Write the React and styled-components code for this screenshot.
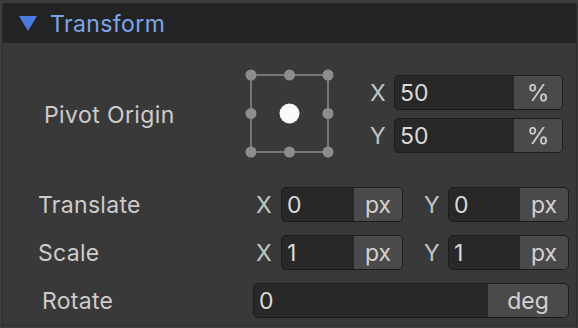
import React from 'react'
import styled, { createGlobalStyle } from "styled-components";

const GlobalStyle = createGlobalStyle`
  html, body {
    margin: 0;
    padding: 0;
    background: #3c3c3c;
  }
  #root {
    padding: 3px 1px 2px 2px;
  }
`;

const PivotDots = () => {
  const pts = [7, 45.5, 84];
  const dots = [];
  pts.forEach((y) =>
    pts.forEach((x) => {
      if (x === 45.5 && y === 45.5) return;
      dots.push(<circle key={`${x}-${y}`} cx={x} cy={y} r="5.5" fill="#8d8d8d" />);
    })
  );
  return (
    <svg width="92" height="92" viewBox="0 0 92 92">
      <rect x="7" y="7" width="77" height="77" fill="none" stroke="#777" strokeWidth="2" />
      {dots}
      <circle cx="45.5" cy="45.5" r="10" fill="#fafafa" />
    </svg>
  );
};

const Field = ({ value, unit, width, unitWidth = 48 }) => (
  <InputBox $width={width}>
    <Value>{value}</Value>
    <Unit $width={unitWidth}>{unit}</Unit>
  </InputBox>
);

const App = () => {
  return (
    <>
      <GlobalStyle />
      <Panel>
        <Header>
          <Caret />
          <Title>Transform</Title>
        </Header>
        <PivotRow>
          <PivotLabel>Pivot Origin</PivotLabel>
          <PivotDots />
          <PivotFields>
            <FieldLine>
              <Axis>X</Axis>
              <Field value="50" unit="%" width={169} />
            </FieldLine>
            <FieldLine>
              <Axis>Y</Axis>
              <Field value="50" unit="%" width={169} />
            </FieldLine>
          </PivotFields>
        </PivotRow>
        <Rows>
          <Row>
            <RowLabel $indent={35}>Translate</RowLabel>
            <Axis $pad={3} $width={28}>X</Axis>
            <Field value="0" unit="px" width={122} />
            <Axis $gap={21}>Y</Axis>
            <Field value="0" unit="px" width={121} />
          </Row>
          <Row>
            <RowLabel $indent={35}>Scale</RowLabel>
            <Axis $pad={3} $width={28}>X</Axis>
            <Field value="1" unit="px" width={122} />
            <Axis $gap={21}>Y</Axis>
            <Field value="1" unit="px" width={121} />
          </Row>
          <Row>
            <RowLabel $indent={39}>Rotate</RowLabel>
            <Field value="0" unit="deg" width={316} unitWidth={80} />
          </Row>
        </Rows>
      </Panel>
    </>
  )
}

export default App

const Panel = styled.div`
  height: 322px;
  background: #393939;
  border: 1px solid #2a2a2a;
  border-top: none;
  font-family: Inter, "Noto Sans", sans-serif;
  font-size: 23px;
  color: #cccccc;
  overflow: hidden;
`;

const Header = styled.div`
  height: 40px;
  background: #232323;
  display: flex;
  align-items: center;
  padding-left: 16px;
`;

const Caret = styled.span`
  width: 0;
  height: 0;
  border-left: 9px solid transparent;
  border-right: 9px solid transparent;
  border-top: 15px solid #4a7be0;
  margin-top: 1px;
`;

const Title = styled.span`
  margin-left: 13px;
  margin-top: 1px;
  color: #7ba6ec;
  letter-spacing: 0.4px;
`;

const PivotRow = styled.div`
  display: flex;
  align-items: center;
  margin-top: 25px;
  height: 92px;
`;

const PivotLabel = styled.div`
  width: 200px;
  padding-left: 41px;
  margin-top: 2px;
  letter-spacing: 0.4px;
`;

const PivotFields = styled.div`
  display: flex;
  flex-direction: column;
  gap: 8px;
  margin-left: 34px;
`;

const FieldLine = styled.div`
  display: flex;
  align-items: center;
`;

const Axis = styled.span`
  width: ${(p) => p.$width || 24}px;
  padding-left: ${(p) => p.$pad || 0}px;
  margin-left: ${(p) => p.$gap || 0}px;
  box-sizing: border-box;
  color: #c4c4c4;
`;

const InputBox = styled.div`
  width: ${(p) => p.$width}px;
  height: 35px;
  box-sizing: border-box;
  display: flex;
  background: #282828;
  border: 1px solid #1c1c1c;
  border-radius: 5px;
  overflow: hidden;
`;

const Value = styled.span`
  flex: 1;
  display: flex;
  align-items: center;
  padding-left: 5px;
  color: #dadada;
`;

const Unit = styled.span`
  width: ${(p) => p.$width}px;
  display: flex;
  align-items: center;
  justify-content: center;
  background: #4a4a4a;
  color: #d2d2d2;
`;

const Rows = styled.div`
  display: flex;
  flex-direction: column;
  gap: 13px;
  margin-top: 27px;
`;

const Row = styled.div`
  display: flex;
  align-items: center;
`;

const RowLabel = styled.span`
  width: 250px;
  box-sizing: border-box;
  padding-left: ${(p) => p.$indent}px;
  letter-spacing: 0.3px;
`;
